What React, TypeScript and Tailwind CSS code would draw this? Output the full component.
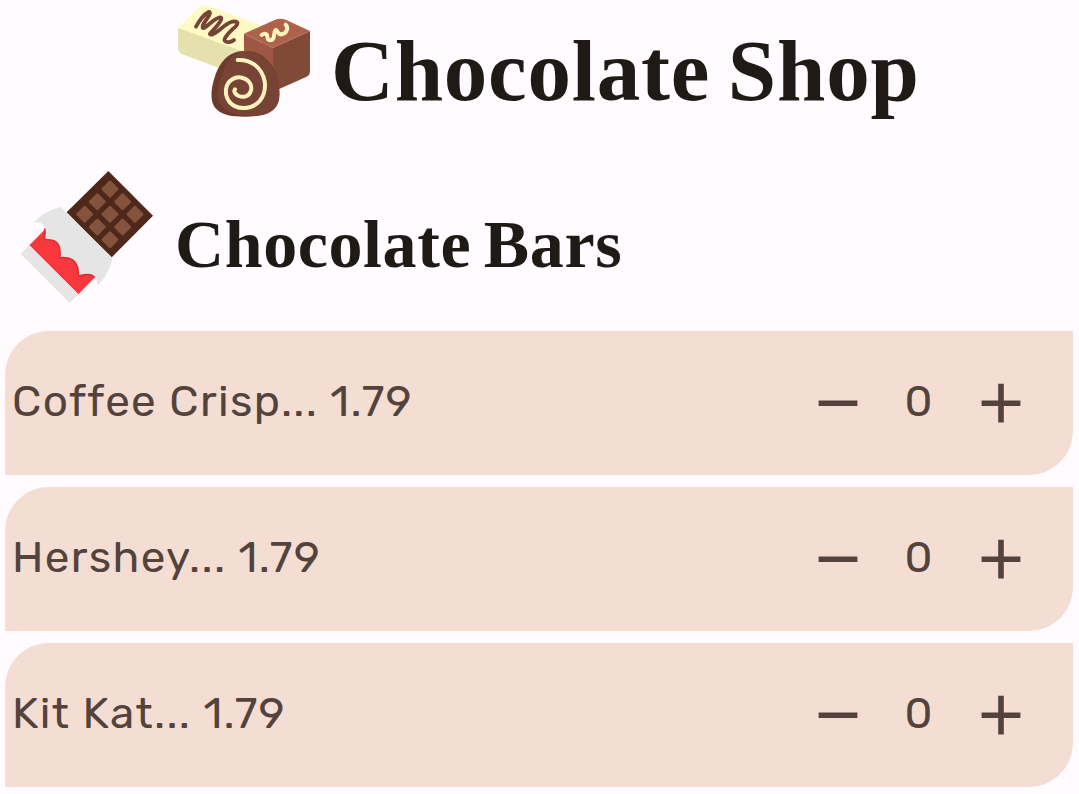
import React from "react";

function PralinesIcon() {
  return (
    <svg className="h-[125px] w-[150px] shrink-0" viewBox="0 0 450 375" fill="none" aria-hidden="true">
      <path d="M24 84L88 22Q99 13 115 17L273 76L222 103V156L190 180L150 205L38 163Q24 157 24 143Z" fill="#FFF9C4" />
      <path d="M24 84L222 155V190L150 205L38 163Q24 157 24 143Z" fill="#E6E0AF" />
      <path d="M222 101L309 143V268H222Z" fill="#9C5843" />
      <path d="M420 93V213Q420 225 410 230L309 275V143Z" fill="#804A37" />
      <path d="M222 101L314 60Q330 53 347 59L420 93L309 143Z" fill="#AF624A" />
      <path d="M78 80C89 60 104 42 116 36C125 35 116 50 108 60C96 76 94 90 105 82C119 73 138 50 152 52C158 53 150 66 144 74C130 93 112 103 123 104C139 105 165 68 188 65C211 62 203 76 187 88C176 98 160 117 164 122C170 129 184 127 192 120" stroke="#774334" strokeWidth="11.5" strokeLinecap="round" strokeLinejoin="round" />
      <path d="M275 105Q282 99 289 103C296 107 287 121 302 121C317 120 309 98 316 91C323 87 322 105 335 103C351 100 356 82 347 74" stroke="#FFF3BE" strokeWidth="12" strokeLinecap="round" strokeLinejoin="round" />
      <path d="M222 153C275 151 309 187 322 235C331 276 332 307 313 326C292 346 260 350 225 350C185 350 159 347 140 328C119 308 122 270 133 235C148 187 175 154 222 153Z" fill="#6B3B2E" />
      <path d="M222 153C275 151 309 187 322 235C331 276 332 307 313 326C292 346 260 348 225 347C192 347 163 332 151 313C136 288 147 244 161 211C174 180 192 156 222 153Z" fill="#774334" />
      <path d="M203 180C244 178 276 203 284 244C290 290 263 324 219 324C183 324 165 296 168 267C172 240 196 229 216 233C239 238 248 258 242 274C237 290 219 293 206 288C195 283 190 274 195 268" stroke="#FFF3BE" strokeWidth="12" strokeLinecap="round" />
    </svg>
  );
}

const squares = [
  [300, 87], [262, 125], [338, 125], [224, 163], [300, 163], [375, 163],
  [262, 201], [338, 201], [300, 239],
];

function ChocolateBarIcon() {
  return (
    <svg className="h-[150px] w-[155px] shrink-0" viewBox="0 0 465 450" fill="none" aria-hidden="true">
      <path d="M295 33L429 167L304 293L170 157Z" fill="#4E281A" />
      {squares.map(([x, y]) => (
        <path
          key={`${x}-${y}`}
          d="M-3 -24Q0 -27 3 -24L24 -3Q27 0 24 3L3 24Q0 27 -3 24L-24 3Q-27 0 -24 -3Z"
          transform={`translate(${x} ${y})`}
          fill="#83533E"
        />
      ))}
      <path d="M58 256L106 207L255 352L205 403Z" fill="#F8383D" />
      <path d="M32 282L58 256L205 403L179 429Z" fill="#E5E5E5" />
      <path d="M105 205L103 234Q104 240 114 239C139 238 155 254 150 286Q149 294 159 293C189 293 207 311 204 342Q205 351 217 347Q245 338 255 352" stroke="#D92E36" strokeWidth="5" />
      <path d="M72 187Q104 151 152 141L307 293Q302 333 265 376Q261 373 260 362Q256 341 235 341Q220 341 207 345Q210 301 175 292Q161 289 152 291Q157 240 120 238Q109 235 106 237Q109 211 106 202Q98 184 72 187Z" fill="#E5E5E5" />
    </svg>
  );
}

function QuantityStepper() {
  return (
    <div className="flex items-center text-[#53433C]">
      <button aria-label="Decrease" className="flex size-[44px] items-center justify-center">
        <svg className="size-[40px]" viewBox="0 0 40 40" aria-hidden="true">
          <path d="M.6 20.2H39.4" stroke="currentColor" strokeWidth="5.6" />
        </svg>
      </button>
      <span className="w-[119px] pr-[2px] pb-[4px] text-center text-[44px] leading-[52px]">0</span>
      <button aria-label="Increase" className="flex size-[44px] items-center justify-center">
        <svg className="size-[40px]" viewBox="0 0 40 40" aria-hidden="true">
          <path d="M.6 20.2H39.4M20 .8V39.6" stroke="currentColor" strokeWidth="5.6" />
        </svg>
      </button>
    </div>
  );
}

function ProductRow({ name, price }: { name: string; price: string }) {
  return (
    <li className="flex h-[144px] items-center justify-between rounded-tl-[44px] rounded-br-[44px] bg-[#F4DED3] pr-[50px] pl-[7px]">
      <span className="pb-[4px] text-[44px] leading-[52px] tracking-[1.35px] whitespace-pre text-[#53433C]">
        {name}... {price}
      </span>
      <QuantityStepper />
    </li>
  );
}

const products = [
  { name: "Coffee Crisp", price: "1.79" },
  { name: "Hershey", price: "1.79" },
  { name: "Kit Kat", price: "1.79" },
];

export default function App() {
  return (
    <main className="h-[794px] w-[1079px] overflow-hidden bg-[#FFFBFF] font-['Rubik','Roboto',sans-serif]">
      <header className="flex h-[160px] items-start pl-[170px]">
        <PralinesIcon />
        <h1 className="pt-[19px] pl-[11px] font-['Liberation_Serif',serif] text-[87px] leading-[104px] font-bold tracking-[0.8px] [word-spacing:-5px] whitespace-nowrap text-[#1F1A16]">
          Chocolate Shop
        </h1>
      </header>
      <section>
        <div className="flex h-[171px] items-start pl-[10px]">
          <ChocolateBarIcon />
          <h2 className="pt-[44px] pl-[10px] font-['Liberation_Serif',serif] text-[68px] leading-[80px] font-bold tracking-[0.6px] [word-spacing:-5px] whitespace-nowrap text-[#1F1A16]">
            Chocolate Bars
          </h2>
        </div>
        <ul className="flex flex-col gap-3 pr-[6px] pl-[5px]">
          {products.map((p) => (
            <ProductRow key={p.name} {...p} />
          ))}
        </ul>
      </section>
    </main>
  );
}
